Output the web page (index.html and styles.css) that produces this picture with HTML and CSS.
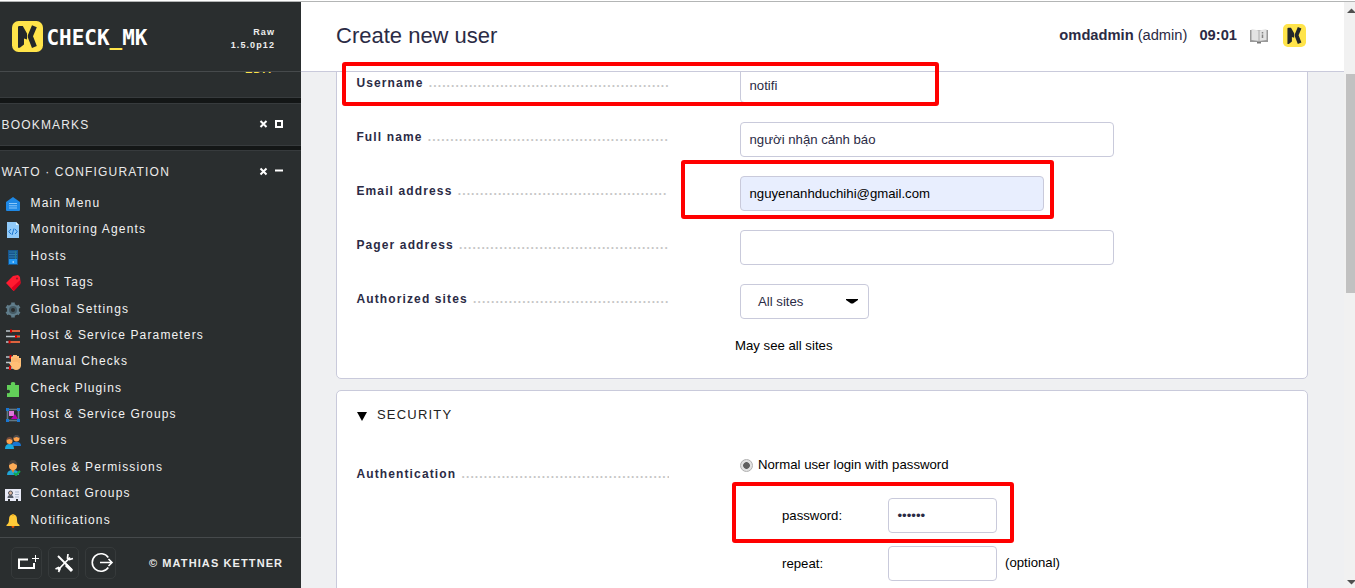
FILE: index.html
```html
<!DOCTYPE html>
<html lang="en">
<head>
<meta charset="utf-8">
<title>Check_MK - Create new user</title>
<link rel="stylesheet" href="styles.css">
</head>
<body>
<svg class="defs" width="0" height="0">
  <symbol id="mk" viewBox="0 0 31 31">
    <rect width="31" height="31" rx="6.5" fill="#ffe44a"/>
    <path d="M6 6.2Q6 5 7.2 5H10.800L15 12.500V18.500L12 17.500V23.500L7.800 26.800H6Z" fill="#22272a"/>
    <path d="M22.400 5.200L18.200 15.200L22.400 26" fill="none" stroke="#22272a" stroke-width="5.200" stroke-linejoin="bevel"/>
  </symbol>
</svg>
<div class="app">
  <aside class="sidebar">
    <header class="side-head">
      <div class="brand">
        <svg class="brand-mark" width="31" height="31"><use href="#mk"/></svg>
        <svg class="wordmark" width="102" height="30" viewBox="0 0 102 30">
          <text x="-0.500" y="24" textLength="101" lengthAdjust="spacingAndGlyphs">CHECK<tspan class="underscore">_</tspan>MK</text>
        </svg>
      </div>
      <div class="version">Raw<br>1.5.0p12</div>
    </header>
    <section class="snapin snapin-cut"><div class="edit-line"><a class="edit">EDIT</a></div></section>
    <section class="snapin bookmarks">
      <h2>BOOKMARKS</h2>
      <svg class="controls" width="26" height="10"><path d="M1.500 1L7.500 7M7.500 1L1.500 7" stroke="#fff" stroke-width="2"/><rect x="17" y="1" width="6" height="6" fill="none" stroke="#fff" stroke-width="2"/></svg>
    </section>
    <section class="snapin wato">
      <div class="snap-head">
        <h2>WATO · CONFIGURATION</h2>
        <svg class="controls" width="26" height="10"><path d="M1.500 1.500L7.500 7.500M7.500 1.500L1.500 7.500" stroke="#fff" stroke-width="2"/><path d="M16 3.500H24" stroke="#fff" stroke-width="2"/></svg>
      </div>
      <ul class="menu">
        <li><svg viewBox="0 0 16 16"><path d="M1 6L8 1l7 5v8q0 1-1 1H2q-1 0-1-1z" fill="#1e88e5"/><path d="M4 7.500h8M4 9.800h8M4 12h8" stroke="#8cc8fa"/></svg>Main Menu</li>
        <li><svg viewBox="0 0 16 16"><path d="M2 0h9l3 3v13H2z" fill="#90caf9"/><path d="M11 0v3h3z" fill="#e1f5fe"/><path d="M6 7L3.800 9.700 6 12M10 7l2.200 2.700L10 12M9 6.500l-2 6.500" fill="none" stroke="#1976d2"/></svg>Monitoring Agents</li>
        <li><svg viewBox="0 0 16 16"><path d="M3 1h10v15H3z" fill="#17568c"/><path d="M4 3h8M4 5.500h8M4 8h8" stroke="#2f78ae"/><path d="M10.500 2v8" stroke="#267d89"/><path d="M4 10h8v5H4z" fill="#2196f3"/><path d="M7.500 13h1.500" stroke="#fff"/></svg>Hosts</li>
        <li><svg viewBox="0 0 16 16"><path d="M8 1l5-1 2 2 .5 6-7 8L1 8z" fill="#ff1b30"/><path d="M15.200 5l.3 4-6.500 7-2.500-3z" fill="#df001f"/><circle cx="12" cy="3.500" r="1.100" fill="#8f202b"/></svg>Host Tags</li>
        <li><svg viewBox="0 0 16 16"><circle cx="8" cy="8" r="6" fill="#607d8b"/><path d="M8 .5v15M1.500 4.200l13 7.600M1.500 11.800l13-7.600" stroke="#607d8b" stroke-width="3.600"/><circle cx="8" cy="8" r="4" fill="#455a64"/><circle cx="8" cy="8" r="2" fill="#2a2e2f"/></svg>Global Settings</li>
        <li><svg viewBox="0 0 16 16"><path d="M1 3h14M1 8.500h14M1 14h14" stroke="#bcc5cb" stroke-width="1.600"/><path d="M6 3h9M11 8.500h4M4 14h11" stroke="#f4511e" stroke-width="1.600"/><path d="M6 1.500v3M11 7v3M4.500 12.500v3" stroke="#d50000" stroke-width="2"/></svg>Host &amp; Service Parameters</li>
        <li><svg viewBox="0 0 16 16"><path d="M1 3h7M1 8.500h7M1 14h7" stroke="#bcc5cb" stroke-width="1.600"/><path d="M5.500 1v4M5 12v4" stroke="#d50000" stroke-width="2"/><path d="M6 9V3h2v5V1h2v6V1h2v6V2h2v6V4h2v8q-1 4-5 4-3 0-5-4L4 9z" fill="#ffbf76"/><path d="M8 4v4M10 4v4M12 4v4M14 5v4" stroke="#e69a51" stroke-width=".4"/></svg>Manual Checks</li>
        <li><svg viewBox="0 0 16 16"><path d="M2 4h4Q5 1 8 1t2 3h4v12H2v-4q3 1 3-1.500T2 9z" fill="#62cf59"/></svg>Check Plugins</li>
        <li><svg viewBox="0 0 16 16"><rect x="2.500" y="2.500" width="11" height="11" fill="none" stroke="#637985" stroke-width="1.600"/><path d="M4 4h5v5H4z" fill="#dd78da"/><path d="M10 7l3 5H6z" fill="#b800b0"/><path d="M1 1h3v3H1zM12 1h3v3h-3zM1 12h3v3H1zM12 12h3v3h-3z" fill="#1976d2"/></svg>Host &amp; Service Groups</li>
        <li><svg viewBox="0 0 16 16"><path d="M7 13q0-5 5-4 4 0 4 4z" fill="#1976d2"/><circle cx="11.500" cy="5.500" r="3" fill="#ffa34d"/><path d="M8.500 5q0-3 3-3t3 3l-3-1z" fill="#49494e"/><path d="M0 16q0-5 4.500-5T9 16z" fill="#1ba9dc"/><circle cx="4.500" cy="8" r="3" fill="#ffa34d"/><path d="M1.500 7q0-3 3-3t3 3l-3-1z" fill="#704b3e"/></svg>Users</li>
        <li><svg viewBox="0 0 16 16"><path d="M2 15q0-5 6-5t6 5z" fill="#20a5d8"/><path d="M6 9h4l-2 4z" fill="#e58b2c"/><circle cx="8" cy="6" r="4" fill="#ffab56"/><path d="M4 5q0-5 4-5t4 5L8 3z" fill="#48413c"/><path d="M9 13l2 2 4-4" fill="none" stroke="#12a84c" stroke-width="2"/></svg>Roles &amp; Permissions</li>
        <li><svg viewBox="0 0 16 16"><path d="M0 3h16v12h-3v-2h-2v2H5v-2H3v2H0z" fill="#e8eaf6"/><path d="M10 6h4M10 8.500h4M10 11h4" stroke="#a9b5c9"/><circle cx="5.500" cy="7" r="2" fill="#ddb79f" stroke="#50535b"/><path d="M2.500 12q0-3 3-3t3 3" fill="#555b66"/></svg>Contact Groups</li>
        <li><svg viewBox="0 0 16 16"><path d="M8 1.500q4 0 4 5c0 4 1 4 2.500 5.500v1H1.500v-1Q4 10.500 4 6.500q0-5 4-5z" fill="#ffca38"/><path d="M6.500 13h3q0 2-1.500 2t-1.500-2z" fill="#e65100"/><circle cx="8" cy="2" r="1" fill="#e9a91e"/></svg>Notifications</li>
      </ul>
    </section>
    <footer class="side-foot">
      <a class="foot-btn"><svg width="29" height="29"><path d="M16 11.500H7V20H22V15" fill="none" stroke="#fff" stroke-width="2"/><path d="M23.500 7v7M20 10.500h7" stroke="#fff"/></svg></a>
      <a class="foot-btn"><svg width="29" height="29"><path d="M9 8L23 22" stroke="#fff" stroke-width="2"/><path d="M17 17l6 6" stroke="#fff" stroke-width="3"/><path d="M9 22L21 9.500M6.500 21l3-1.500L11 21l-1.500 3M19 6l-.5 4 2 1.500 3.500-1" fill="none" stroke="#fff" stroke-width="1.700"/></svg></a>
      <a class="foot-btn"><svg width="29" height="29"><path d="M22.300 9.500A8.800 8.800 0 1 0 22.300 19.500" fill="none" stroke="#fff" stroke-width="1.600"/><path d="M14 14.500h11.500M22.500 11l3.500 3.500-3.500 3.500" fill="none" stroke="#fff" stroke-width="1.600"/></svg></a>
      <span class="copyright">© MATHIAS KETTNER</span>
    </footer>
  </aside>
  <main class="main">
    <header class="page-head">
      <h1>Create new user</h1>
      <div class="session"><b>omdadmin</b> (admin) <b class="clock">09:01</b>
        <svg class="book" width="18" height="16"><path d="M0 2h18v12H0z" fill="#999"/><path d="M1.500 1L9 2.500V13l-7.500-1zM16.500 1L9 2.500V13l7.500-1z" fill="#e3e3e3"/><path d="M9 2.500V15" stroke="#aaa"/><path d="M12.500 4v1.500M12.500 6.500V10" stroke="#858585" stroke-width="1.500"/><path d="M7 14h4v1.500H7z" fill="#777"/></svg>
        <svg class="head-mark" width="23" height="23"><use href="#mk"/></svg>
      </div>
    </header>
    <div class="scroll">
      <section class="card identity">
        <div class="row"><div class="label">Username <i>......................................................</i></div><div class="field short">notifi</div></div>
        <div class="row"><div class="label">Full name <i>......................................................</i></div><div class="field wide">người nhận cảnh báo</div></div>
        <div class="row"><div class="label">Email address <i>...............................................</i></div><div class="field filled">nguyenanhduchihi@gmail.com</div></div>
        <div class="row"><div class="label">Pager address <i>...............................................</i></div><div class="field wide"></div></div>
        <div class="row"><div class="label">Authorized sites <i>............................................</i></div><div class="field select">All sites<svg width="12" height="5"><path d="M0 0h12v1L7 4.500H5L0 1z" fill="#000"/></svg></div></div>
        <div class="hint">May see all sites</div>
      </section>
      <section class="card security">
        <h3><svg width="10" height="9"><path d="M0 0h10L5 9z"/></svg>SECURITY</h3>
        <div class="auth">
          <div class="label">Authentication <i>...............................................</i></div>
          <div class="auth-options">
            <div class="radio-line"><span class="radio"></span>Normal user login with password</div>
            <div class="pw-row"><span>password:</span><div class="field dots">••••••</div></div>
            <div class="pw-row"><span>repeat:</span><div class="field"></div><em>(optional)</em></div>
          </div>
        </div>
      </section>
    </div>
  </main>
  <div class="scrollbar">
    <svg width="11" height="9" viewBox="0 0 11 9"><path d="M3 8L7.500 3.500 12 8z" fill="#505050"/></svg>
    <div class="thumb"></div>
    <svg width="11" height="9" viewBox="0 0 11 9"><path d="M3 1L7.500 5.500 12 1z" fill="#505050"/></svg>
  </div>
</div>
<div class="mark mark-user"></div>
<div class="mark mark-email"></div>
<div class="mark mark-password"></div>
</body>
</html>
```

FILE: styles.css
```css
* { box-sizing: border-box; }
body {
  margin: 0;
  height: 588px;
  overflow: hidden;
  background: #fff;
  font-family: "Liberation Sans", Arial, sans-serif;
  font-size: 13.200px;
  color: #000;
}
svg { display: block; flex: none; }
.defs { position: absolute; }
h1, h2, h3, ul { margin: 0; padding: 0; font-weight: normal; }
.app { display: flex; height: 588px; padding-top: 1px; }

.sidebar {
  width: 301px;
  flex: none;
  display: flex;
  flex-direction: column;
  background: #131616;
  border-top: 1px solid #b3b5b5;
  color: #fff;
}
.side-head {
  height: 70px;
  flex: none;
  display: flex;
  justify-content: space-between;
  padding: 19px 26px 0 12px;
  background: #2a2e2f;
  border-bottom: 1px solid #464a4c;
}
.brand { display: flex; gap: 4px; }
.wordmark text {
  font: bold 22px "DejaVu Sans Mono", monospace;
  fill: #fff;
}
.wordmark .underscore { fill: #ffe44a; }
.version {
  padding-top: 5px;
  font-size: 9px;
  font-weight: bold;
  line-height: 13px;
  letter-spacing: 1.1px;
  text-align: right;
  color: #eee;
}
.snapin {
  flex: none;
  background: #2a2e2f;
  border: solid #373b3d;
  border-width: 1px 0;
}
.snapin-cut { height: 26px; border-top: 0; margin-bottom: 5px; }
.edit-line {
  height: 1px;
  display: flex;
  align-items: flex-end;
  justify-content: flex-end;
  padding-right: 27px;
  overflow: hidden;
}
.edit { margin-bottom: -1px; font-size: 11px; font-weight: bold; line-height: 9px; letter-spacing: 1px; color: #ffe44a; }
.bookmarks {
  height: 43px;
  margin-bottom: 4px;
  display: flex;
  align-items: center;
  justify-content: space-between;
}
.snapin h2 { padding-left: 1.500px; font-size: 12px; line-height: 14px; letter-spacing: 1.18px; color: #eaeaea; }
.controls { margin-right: 16px; }
.wato { flex: 1; min-height: 0; overflow: hidden; border-bottom: 0; }
.snap-head { display: flex; align-items: center; justify-content: space-between; height: 39px; padding-top: 2px; }
.menu { list-style: none; }
.menu li {
  display: flex;
  height: 26.38px;
  padding-left: 5px;
  gap: 9.500px;
  font-size: 12px;
  line-height: 27px;
  letter-spacing: 1.15px;
  color: #f2f2f2;
}
.menu svg { width: 16px; height: 16px; margin-top: 6px; }
.side-foot {
  height: 51px;
  flex: none;
  display: flex;
  align-items: flex-start;
  gap: 6px;
  padding: 9px 0 0 11px;
  background: #2a2e2f;
  border-top: 1px solid #464a4c;
}
.foot-btn { width: 31px; height: 32px; border: 1px solid #363a3b; border-radius: 5px; }
.copyright { padding: 9px 0 0 27px; font-size: 11px; font-weight: bold; line-height: 14px; letter-spacing: 1.1px; white-space: nowrap; color: #eee; }

.main {
  width: 1043px;
  flex: none;
  display: flex;
  flex-direction: column;
  background: #eff0f2;
  border-top: 1px solid #b3b5b5;
}
.page-head {
  height: 70px;
  flex: none;
  display: flex;
  justify-content: space-between;
  padding: 0 38px 0 35px;
  background: #fff;
  border-bottom: 1px solid #c9cadb;
  color: #2b2b45;
}
.page-head h1 { padding-top: 21px; font-size: 22px; line-height: 26px; }
.session { display: flex; align-items: flex-start; gap: 4px; padding-top: 24px; font-size: 14.700px; line-height: 18px; }
.clock { margin-left: 8px; }
.book { margin: 2px 11px 0 9px; }
.head-mark { margin-top: -2px; }

.scroll { flex: 1; min-height: 0; overflow: hidden; padding: 0 36px 0 35px; }
.card { background: #fff; border: 1px solid #c9cadb; border-radius: 5px; }
.identity { height: 327px; margin: -20px 0 11px; padding: 15px 19px 0; }
.row { display: grid; grid-template-columns: 384px auto; justify-content: start; margin-bottom: 19px; }
.label {
  width: 313px;
  height: 16px;
  margin-top: 8px;
  padding-left: 0.400px;
  overflow: hidden;
  white-space: nowrap;
  font-size: 12px;
  font-weight: bold;
  line-height: 14px;
  letter-spacing: 1.13px;
  color: #2b2b45;
}
.label i { margin-left: 0.800px; font-style: normal; color: #c6c6c6; }
.field {
  width: 109px;
  height: 35px;
  padding: 0 8.500px;
  border: 1px solid #c9cadb;
  border-radius: 4px;
  background: #fff;
  font-size: 13.200px;
  line-height: 33px;
  color: #2b2b45;
}
.wide { width: 374px; }
.short { width: 197px; }
.filled { width: 304px; background: #e8eefe; color: #000; }
.select { width: 129px; display: flex; align-items: center; justify-content: space-between; padding: 0 10px 0 17px; }
.hint { padding-left: 379px; line-height: 15px; }
.security { height: 260px; padding: 16px 19px 0; }
.security h3 { display: flex; align-items: center; gap: 10px; font-size: 13px; line-height: 15px; letter-spacing: 1.2px; padding-left: 1px; color: #222; }
.security h3 svg { margin-top: 3px; }
.auth { display: grid; grid-template-columns: 384px auto; justify-content: start; padding-top: 34px; }
.auth .label { margin-top: 11px; }
.radio-line { display: flex; gap: 5px; line-height: 15px; }
.radio { width: 13px; height: 13px; margin-top: 2px; border: 1px solid #b0b0b0; border-radius: 50%; background: radial-gradient(circle, #606060 0 3px, #e2e2e2 3.700px); }
.auth-options { padding-top: 1px; }
.pw-row { display: flex; align-items: center; height: 35px; margin-top: 13px; padding-left: 42px; }
.radio-line + .pw-row { margin-top: 26px; }
.pw-row span { width: 106px; }
.pw-row em { margin: -2px 0 0 8px; font-style: normal; }

.scrollbar {
  width: 11px;
  flex: none;
  display: flex;
  flex-direction: column;
  background: #f1f1f1;
  border-top: 1px solid #b3b5b5;
}
.scrollbar svg { margin-top: 3px; }
.thumb { height: 219px; margin: 60px 0 auto 2px; background: #c1c1c1; }
.scrollbar svg:last-child { margin: 0; }

/* highlight frames drawn over the form */
.mark { position: absolute; border: 4px solid #f00; border-radius: 3px; }
.mark-user { left: 342px; top: 62px; width: 597px; height: 44px; }
.mark-email { left: 681px; top: 160px; width: 373px; height: 59px; }
.mark-password { left: 732px; top: 482px; width: 282px; height: 61px; }
```
